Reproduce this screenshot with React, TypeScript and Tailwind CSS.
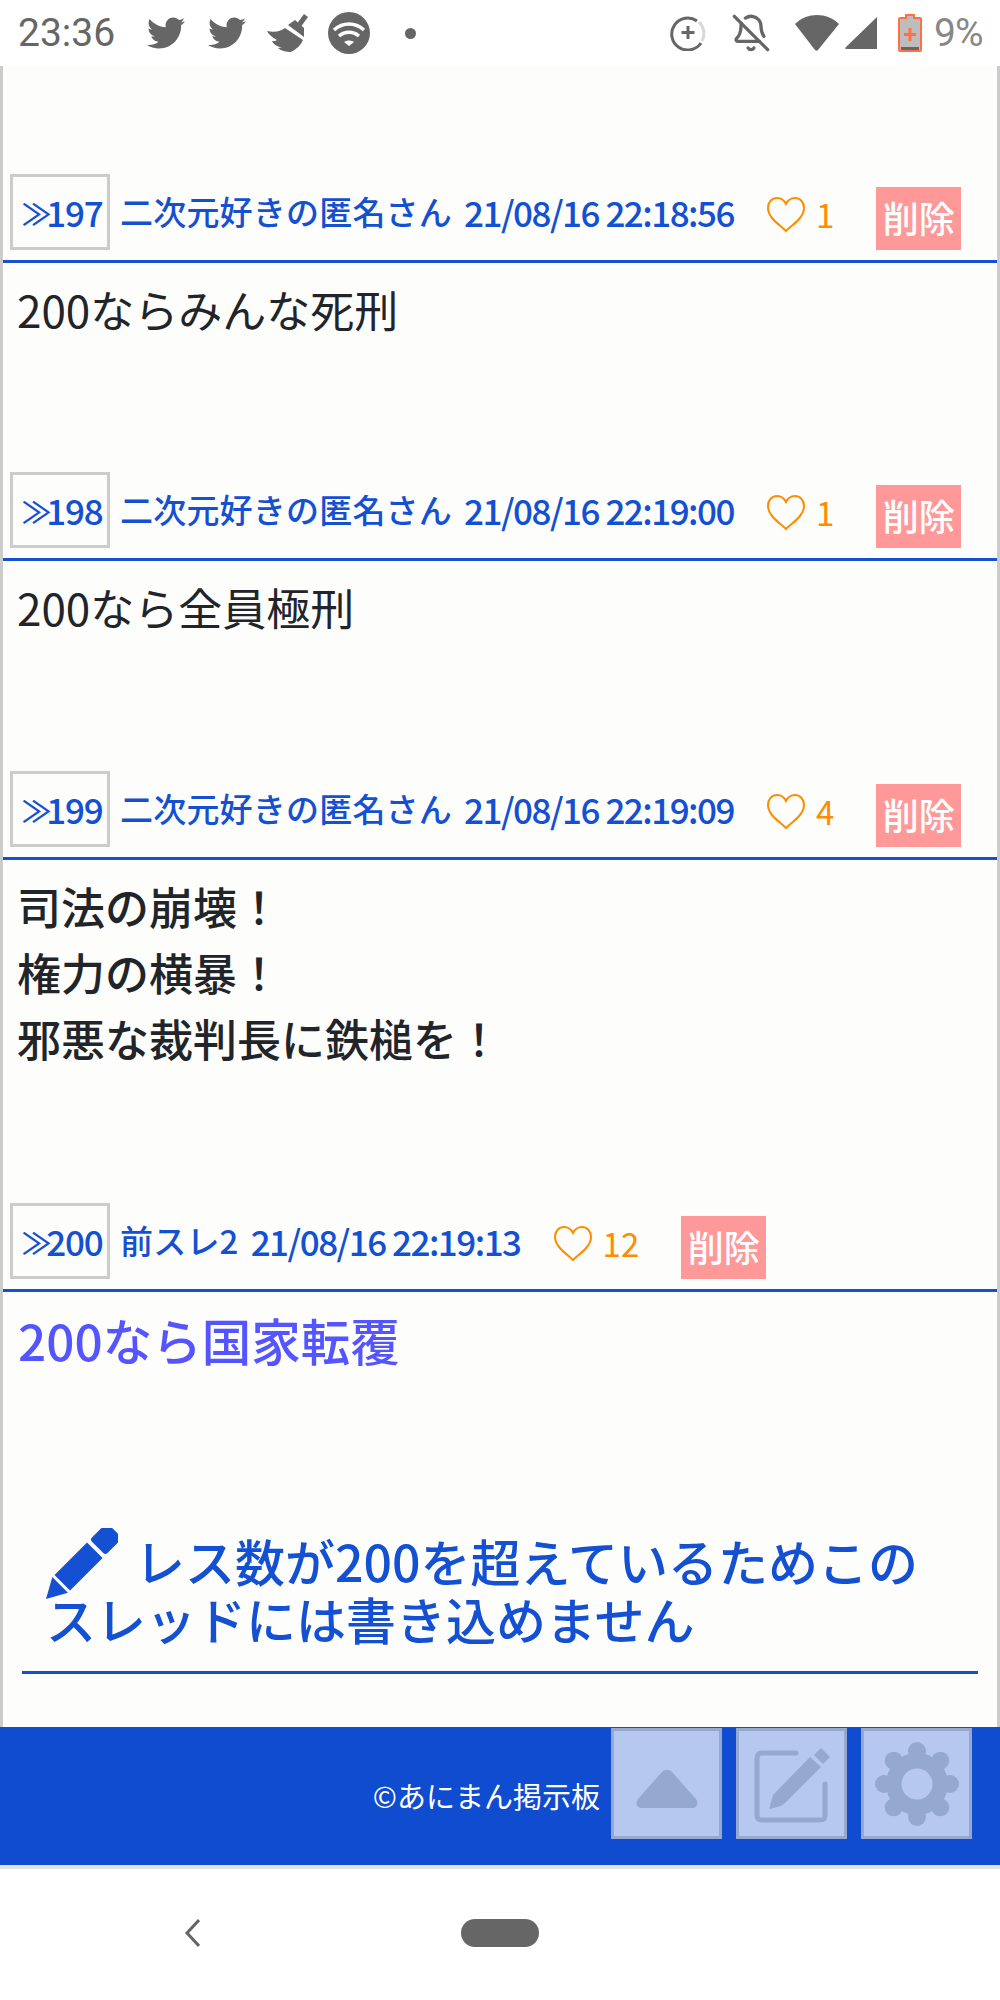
import { FaTwitter } from "react-icons/fa";
import { BellOff } from "lucide-react";

const POSTS = [
  { no: 197, name: "二次元好きの匿名さん", date: "21/08/16 22:18:56", likes: 1, lines: ["200ならみんな死刑"], body: "pb-[130px]" },
  { no: 198, name: "二次元好きの匿名さん", date: "21/08/16 22:19:00", likes: 1, lines: ["200なら全員極刑"], body: "pb-[131px]" },
  { no: 199, name: "二次元好きの匿名さん", date: "21/08/16 22:19:09", likes: 4, lines: ["司法の崩壊！", "権力の横暴！", "邪悪な裁判長に鉄槌を！"], body: "pb-[132px] font-medium" },
];

function Heart() {
  return (
    <svg viewBox="0 0 40 38" className="w-[40px] h-[38px] mt-[6px]" fill="none" stroke="#ff8c00" strokeWidth="2">
      <path d="M20 35 C14 29 2 22 2 12 C2 6 6 2 11 2 C15 2 18 4 20 8 C22 4 25 2 29 2 C34 2 38 6 38 12 C38 22 26 29 20 35 Z" />
    </svg>
  );
}

function PostHeader({ no, name, date, likes }: { no: number; name: string; date: string; likes: number }) {
  return (
    <div className="flex items-end pl-[7px] pb-[10px] border-b-[3px] border-[#1450d2]">
      <div className="w-[100px] h-[76px] border-[3px] border-[#cccccc] flex items-center justify-center pl-[7px] text-[35px] font-medium text-[#1450d2] tracking-[-1.2px] whitespace-nowrap">
        <span className="text-[30px] -ml-[3px] -mr-[4px]">≫</span>{no}
      </div>
      <div className="h-[76px] flex items-center ml-[10px] font-medium text-[#1450d2] whitespace-nowrap">
        <span className="text-[33px] tracking-[0.2px]">{name}</span>
        <span className="ml-[12px] text-[35px] tracking-[-1.5px]">{date}</span>
      </div>
      <div className="h-[76px] flex items-center ml-[32px] text-[33px] text-[#ff8c00]">
        <Heart />
        <span className="ml-[10px] mt-[6px]">{likes}</span>
      </div>
      <div className="ml-[42px] w-[85px] h-[63px] pb-[3px] bg-[#ff9999] text-white text-[36px] font-medium flex items-center justify-center">
        削除
      </div>
    </div>
  );
}

function StatusBar() {
  return (
    <div className="h-[66px] bg-white flex items-center text-[#666666] font-['Roboto',sans-serif]">
      <span className="ml-[18px] w-[95px] text-[39px] leading-none">23:36</span>
      <FaTwitter className="ml-[34px] w-[38px] h-[38px]" />
      <FaTwitter className="ml-[23px] w-[38px] h-[38px]" />
      <svg viewBox="0 0 42 38" className="ml-[21px] w-[42px] h-[38px]" fill="#666666">
        <path d="M37 0l4 3-8 11-4-3z" />
        <path d="M21 11l7-5 9 8 0 9z" />
        <path d="M0 17C8 19 14 17 18 14L36 26C34 31 30 35 24 38C20 38 14 37 11 34C13 34 14 33 15 33C11 33 7 31 5 27C7 27 9 27 10 26C6 24 2 21 0 17Z" />
      </svg>
      <svg viewBox="0 0 42 42" className="ml-[19px] w-[42px] h-[42px]">
        <circle cx="21" cy="21" r="21" fill="#666666" />
        <path d="M6 18c9-8 21-8 30 0M11 24c6-5 14-5 20 0" fill="none" stroke="#fff" strokeWidth="3.5" />
        <path d="M16 30c3-2 7-2 10 0l-5 4z" fill="#fff" />
      </svg>
      <span className="ml-[35px] w-[11px] h-[11px] rounded-full bg-[#666666]" />
      <svg viewBox="0 0 36 36" className="ml-[254px] w-[36px] h-[36px]" fill="none">
        <path d="M29 7A16 16 0 0 1 32 26" stroke="#d8d8d8" strokeWidth="3" />
        <path d="M27 6A16 16 0 1 0 31 28" stroke="#666666" strokeWidth="3" />
        <path d="M18 11v13M11.500 17.500h13" stroke="#666666" strokeWidth="3" />
      </svg>
      <BellOff className="ml-[25px] w-[40px] h-[40px]" strokeWidth={2} />
      <svg viewBox="0 0 44 36" className="ml-[24px] w-[44px] h-[36px]" fill="#666666">
        <path d="M0 9C12-3 32-3 44 9L23 35c-1 1-2 1-3 0z" />
      </svg>
      <svg viewBox="0 0 32 32" className="ml-[6px] w-[32px] h-[32px]" fill="#666666">
        <path d="M32 0v31c0 1 0 1-1 1H1c-1 0-1-1 0-2z" />
      </svg>
      <svg viewBox="0 0 24 38" className="ml-[21px] w-[24px] h-[38px]">
        <path d="M8 1h8v3h6c1 0 1 1 1 1v31c0 1-1 1-1 1H2c-1 0-1-1-1-1V5c0-1 1-1 1-1h6z" fill="#bdbdbd" stroke="#ff7043" strokeWidth="2" />
        <rect x="3" y="33" width="18" height="3" fill="#666666" />
        <path d="M12 14v13M6 20.500h12" stroke="#ff7043" strokeWidth="3" />
      </svg>
      <span className="ml-[12px] text-[39px] leading-none tracking-[-1px] text-[#888888] whitespace-nowrap">9%</span>
    </div>
  );
}

function FooterButton({ children }: { children: React.ReactNode }) {
  return (
    <div className="w-[111px] h-[111px] bg-[#b6c8ef] border-[3px] border-[#95a8cf] flex items-center justify-center">
      {children}
    </div>
  );
}

export default function App() {
  return (
    <div className="w-[1000px] h-[2000px] bg-white font-['Noto_Sans_CJK_JP',sans-serif] overflow-hidden">
      <StatusBar />

      <div className="bg-[#fdfdfc] border-x-[3px] border-[#cccccc] h-[1661px] pt-[108px]">
        {POSTS.map((p) => (
          <div key={p.no}>
            <PostHeader no={p.no} name={p.name} date={p.date} likes={p.likes} />
            <div className={`pt-[13px] pl-[14px] text-[44px] leading-[66px] text-[#212529] ${p.body}`}>
              {p.lines.map((line) => (
                <div key={line}>{line}</div>
              ))}
            </div>
          </div>
        ))}

        <PostHeader no={200} name="前スレ2" date="21/08/16 22:19:13" likes={12} />
        <div className="pt-[15px] pl-[15px] text-[49.500px] leading-[66px] font-medium text-[#5555ff]">200なら国家転覆</div>

        {/* closed thread notice */}
        <div className="mt-[158px] mx-[19px] pl-[24px] pb-[24px] border-b-[3px] border-[#1450d2] text-[50px] leading-[58px] font-medium text-[#1450d2] whitespace-nowrap">
          <svg viewBox="0 0 72 72" className="inline-block align-middle w-[72px] h-[72px] -my-[20px] mr-[17px] -mt-[28px]" fill="#1450d2">
            <g transform="translate(0 71) rotate(-45)">
              <path d="M0 0L20-11V11Z" />
              <rect x="23" y="-11" width="46" height="22" />
              <rect x="73" y="-11" width="24" height="22" rx="3" />
            </g>
          </svg>
          レス数が200を超えているためこの
          <br />
          スレッドには書き込めません
        </div>
      </div>

      <div className="h-[138px] bg-[#104cd0] flex justify-end pt-[1px] pr-[28px] gap-[14px]">
        <div className="h-[111px] flex items-end pb-[22px] -mr-[3px] text-[29px] text-white whitespace-nowrap">©あにまん掲示板</div>
        <FooterButton>
          <svg viewBox="0 0 62 40" className="w-[62px] h-[40px] mt-[10px]" fill="#95a8cf">
            <path d="M26 3c3-3 7-3 10 0l24 27c3 4 1 9-4 9H6c-5 0-7-5-4-9z" />
          </svg>
        </FooterButton>
        <FooterButton>
          <svg viewBox="0 0 78 76" className="w-[78px] h-[76px] ml-[3px] mt-[2px]" fill="none">
            <path d="M42 6H8C4 6 3 8 3 12V68C3 72 4 73 8 73H66C70 73 71 72 71 68V37" stroke="#95a8cf" strokeWidth="5" strokeLinecap="round" />
            <path d="M56 10L67 20L31 56C29 58 26 59 24 60L15 62C15 62 18 52 19 48Z" fill="#95a8cf" />
            <path d="M67 1L76 10L69 17L60 8Z" fill="#95a8cf" />
          </svg>
        </FooterButton>
        <FooterButton>
          <svg viewBox="0 0 84 84" className="w-[84px] h-[84px]" fill="#95a8cf">
            <circle cx="42" cy="42" r="31" />
            <circle cx="42" cy="9" r="9" />
            <circle cx="42" cy="75" r="9" />
            <circle cx="9" cy="42" r="9" />
            <circle cx="75" cy="42" r="9" />
            <circle cx="18.700" cy="18.700" r="9" />
            <circle cx="65.300" cy="18.700" r="9" />
            <circle cx="18.700" cy="65.300" r="9" />
            <circle cx="65.300" cy="65.300" r="9" />
            <circle cx="42" cy="42" r="15.500" fill="#b6c8ef" />
          </svg>
        </FooterButton>
      </div>
      <div className="h-[4px] bg-[#e0e3ea]" />

      {/* nav bar */}
      <div className="h-[131px] flex items-start pt-[50px]">
        <svg viewBox="0 0 16 28" className="ml-[184px] w-[16px] h-[28px]" fill="none" stroke="#666666" strokeWidth="3">
          <path d="M15 1L3 14L15 27" />
        </svg>
        <div className="ml-[261px] w-[78px] h-[28px] rounded-[14px] bg-[#666666]" />
      </div>
    </div>
  );
}
